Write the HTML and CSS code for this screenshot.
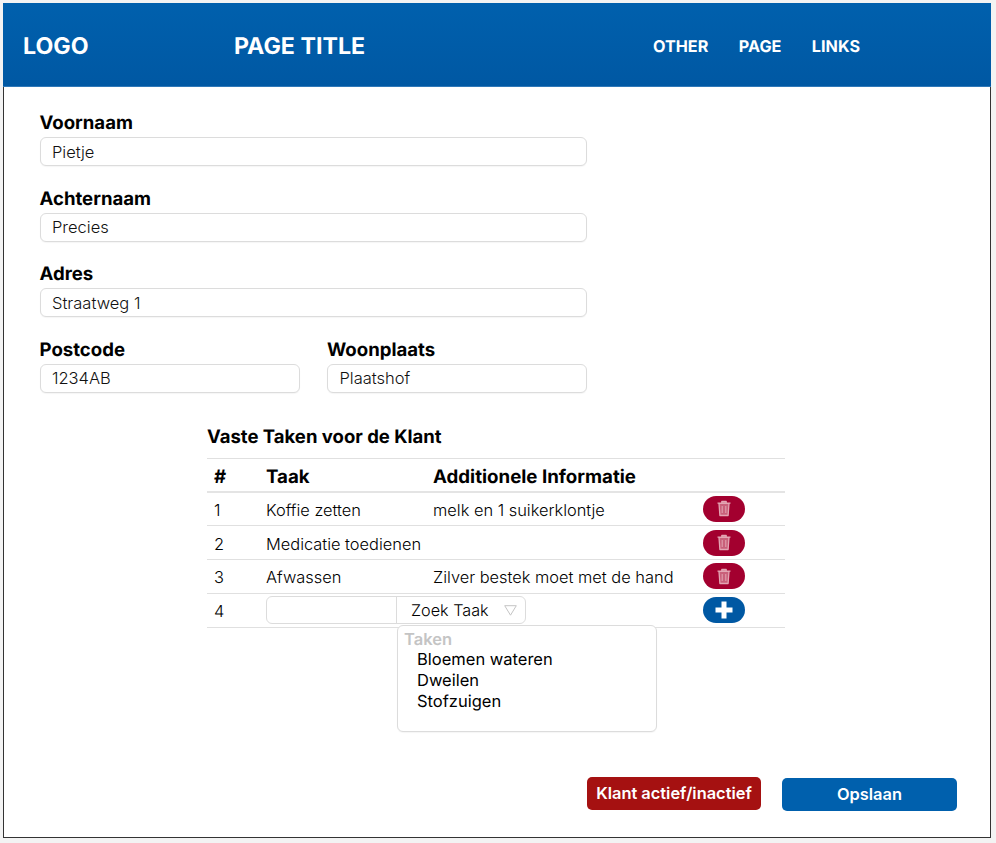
FILE: index.html
```html
<!DOCTYPE html>
<html>
<head>
    <title>Klant</title>
    <link rel="stylesheet" href="styles.css">
</head>
<body>
    <div class="frame">
        <header class="topbar">
            <div class="logo">LOGO</div>
            <div class="pageTitle">PAGE TITLE</div>
            <nav class="topLinks">
                <a>OTHER</a>
                <a>PAGE</a>
                <a>LINKS</a>
            </nav>
        </header>
        <main class="content">
            <form class="clientForm">
                <div class="field">
                    <label>Voornaam</label>
                    <input type="text" value="Pietje">
                </div>
                <div class="field">
                    <label>Achternaam</label>
                    <input type="text" value="Precies">
                </div>
                <div class="field">
                    <label>Adres</label>
                    <input type="text" value="Straatweg 1">
                </div>
                <div class="fieldRow">
                    <div class="field">
                        <label>Postcode</label>
                        <input type="text" value="1234AB">
                    </div>
                    <div class="field">
                        <label>Woonplaats</label>
                        <input type="text" value="Plaatshof">
                    </div>
                </div>
            </form>
            <section class="tasks">
                <h2>Vaste Taken voor de Klant</h2>
                <table class="taskTable">
                    <thead>
                        <tr>
                            <th class="colNr">#</th>
                            <th class="colTask">Taak</th>
                            <th class="colInfo">Additionele Informatie</th>
                            <th class="colAction"></th>
                        </tr>
                    </thead>
                    <tbody>
                        <tr>
                            <td>1</td>
                            <td>Koffie zetten</td>
                            <td>melk en 1 suikerklontje</td>
                            <td><button type="button" class="pill pillRed"><svg width="16" height="17" viewBox="0 0 16 17"><use href="#trash"/></svg></button></td>
                        </tr>
                        <tr>
                            <td>2</td>
                            <td>Medicatie toedienen</td>
                            <td></td>
                            <td><button type="button" class="pill pillRed"><svg width="16" height="17" viewBox="0 0 16 17"><use href="#trash"/></svg></button></td>
                        </tr>
                        <tr>
                            <td>3</td>
                            <td>Afwassen</td>
                            <td>Zilver bestek moet met de hand</td>
                            <td><button type="button" class="pill pillRed"><svg width="16" height="17" viewBox="0 0 16 17"><use href="#trash"/></svg></button></td>
                        </tr>
                        <tr>
                            <td>4</td>
                            <td colspan="2" class="pickerCell">
                                <div class="taskPicker">
                                    <input type="text" class="pickerInput">
                                    <div class="pickerSelect">
                                        <span>Zoek Taak</span>
                                        <svg width="13" height="11" viewBox="0 0 13 11"><path d="M0.7 0.7H12.3L6.5 10.2Z" fill="none" stroke="#c4c4c4" stroke-width="1"/></svg>
                                    </div>
                                    <div class="pickerMenu">
                                        <div class="menuTitle">Taken</div>
                                        <div class="menuItem">Bloemen wateren</div>
                                        <div class="menuItem">Dweilen</div>
                                        <div class="menuItem">Stofzuigen</div>
                                    </div>
                                </div>
                            </td>
                            <td><button type="button" class="pill pillBlue"><svg width="18" height="18" viewBox="0 0 18 18"><path d="M6.5 0.5H11.5V6.5H17.5V11.5H11.5V17.5H6.5V11.5H0.5V6.5H6.5Z" fill="#fff"/></svg></button></td>
                        </tr>
                    </tbody>
                </table>
            </section>
            <div class="actions">
                <button type="button" class="btn btnRed">Klant actief/inactief</button>
                <button type="button" class="btn btnBlue">Opslaan</button>
            </div>
        </main>
    </div>
    <svg width="0" height="0" class="defs">
        <symbol id="trash" viewBox="0 0 16 17">
            <path d="M1.5 3.2H14.5M5.8 3V1.5H10.2V3M3 3.4L3.9 15.5H12.1L13 3.4Z" fill="#c9607a" stroke="#e3a5b3" stroke-width="1.3" stroke-linejoin="round"/>
            <path d="M6.2 6V13M9.8 6V13" stroke="#e3a5b3" stroke-width="1"/>
        </symbol>
    </svg>
</body>
</html>
```

FILE: styles.css
```css
* {
    box-sizing: border-box;
}
body {
    margin: 0;
    padding: 3px 5px 5px 3px;
    background: #f3f3f3;
    font-family: Inter, "Liberation Sans", sans-serif;
    color: #000;
    text-rendering: geometricPrecision;
}
.defs {
    display: block;
    height: 0;
}
.frame {
    height: 835px;
    background: #fff;
    border: 1px solid #333;
    border-top: none;
    display: flex;
    flex-direction: column;
}
.topbar {
    height: 84px;
    margin: 0 -1px;
    padding-top: 2px;
    flex: none;
    display: flex;
    align-items: center;
    background: linear-gradient(180deg, #0060ad, #0058a3);
    border-bottom: 1px solid #2f78b8;
    color: #fff;
    font-weight: 700;
}
.logo {
    width: 231px;
    padding-left: 20px;
    font-size: 23.2px;
}
.pageTitle {
    width: 419px;
    font-size: 23.2px;
}
.topLinks {
    display: flex;
    gap: 30.5px;
    font-size: 16.2px;
}
.content {
    flex: 1;
    display: flex;
    flex-direction: column;
    padding: 25px 33px 26px 35.5px;
}
.clientForm {
    width: 547.5px;
}
.field {
    margin-bottom: 21.6px;
}
.field label {
    display: block;
    font-size: 18.6px;
    font-weight: 700;
    line-height: 22px;
    margin-bottom: 3px;
}
.field input {
    display: block;
    width: 100%;
    height: 29px;
    padding: 0 11.5px;
    border: 1px solid #dcdcdc;
    border-radius: 6px;
    font-family: inherit;
    font-size: 16.5px;
    font-weight: 300;
    color: #111;
    box-shadow: 0 1px 1px rgba(0, 0, 0, 0.04);
}
.fieldRow {
    display: flex;
    gap: 27.5px;
}
.fieldRow .field {
    width: 260px;
    margin-bottom: 0;
}
.tasks {
    width: 578px;
    margin-left: 167.5px;
    margin-top: 33.4px;
}
.tasks h2 {
    margin: 0;
    font-size: 18.5px;
    font-weight: 700;
    line-height: 22px;
    margin-bottom: 10px;
}
.taskTable {
    width: 100%;
    border-collapse: collapse;
    table-layout: fixed;
    border-top: 1px solid #e0e0e0;
}
.taskTable th {
    height: 33px;
    padding: 3px 7px 0;
    font-size: 18.7px;
    font-weight: 700;
    text-align: left;
    white-space: nowrap;
    border-bottom: 2px solid #e4e4e4;
}
.taskTable td {
    height: 33.9px;
    padding: 2px 7px 0;
    font-size: 16.4px;
    font-weight: 300;
    white-space: nowrap;
    border-bottom: 1px solid #e0e0e0;
}
.taskTable th.colNr {
    width: 52px;
}
.taskTable th.colTask {
    width: 166px;
}
.taskTable th.colInfo {
    width: 270px;
    padding-left: 8px;
}
.taskTable td:nth-child(3) {
    padding-left: 8px;
}
.taskTable td:last-child {
    padding: 0;
}
.taskTable td.pickerCell {
    padding: 0 7px;
}
.pill {
    display: flex;
    align-items: center;
    justify-content: center;
    width: 42px;
    height: 26px;
    margin-left: 8px;
    padding: 0;
    border: none;
    border-radius: 13px;
}
.pillRed {
    background: #a3002f;
}
.pillBlue {
    background: #0058a3;
}
.taskPicker {
    position: relative;
    display: flex;
    width: 260px;
    height: 28px;
    border: 1px solid #dcdcdc;
    border-radius: 6px;
}
.pickerInput {
    width: 130px;
    height: 100%;
    border: none;
    border-right: 1px solid #dcdcdc;
    background: transparent;
}
.pickerSelect {
    flex: 1;
    display: flex;
    align-items: center;
    justify-content: space-between;
    padding: 0 8px 0 14px;
}
.pickerSelect span {
    font-size: 16.2px;
}
.pickerMenu {
    position: absolute;
    top: 28px;
    left: 130px;
    width: 260px;
    height: 107px;
    padding: 4px 6px;
    background: #fff;
    border: 1px solid #dcdcdc;
    border-radius: 6px;
    box-shadow: 0 1px 1px rgba(0, 0, 0, 0.04);
    font-weight: 400;
}
.menuTitle {
    font-size: 16.5px;
    font-weight: 600;
    color: #c4c4c4;
    line-height: 19px;
}
.menuItem {
    padding-left: 13px;
    font-size: 16.5px;
    line-height: 21px;
}
.actions {
    margin-top: auto;
    display: flex;
    justify-content: flex-end;
    align-items: flex-end;
    gap: 21px;
}
.btn {
    height: 33px;
    padding: 0 0 2px;
    border: none;
    border-radius: 5px;
    color: #fff;
    font-family: inherit;
    font-size: 16.4px;
    font-weight: 600;
}
.btnRed {
    width: 174px;
    background: #a51111;
    margin-bottom: 1px;
}
.btnBlue {
    width: 175px;
    background: #0060ad;
}
```
